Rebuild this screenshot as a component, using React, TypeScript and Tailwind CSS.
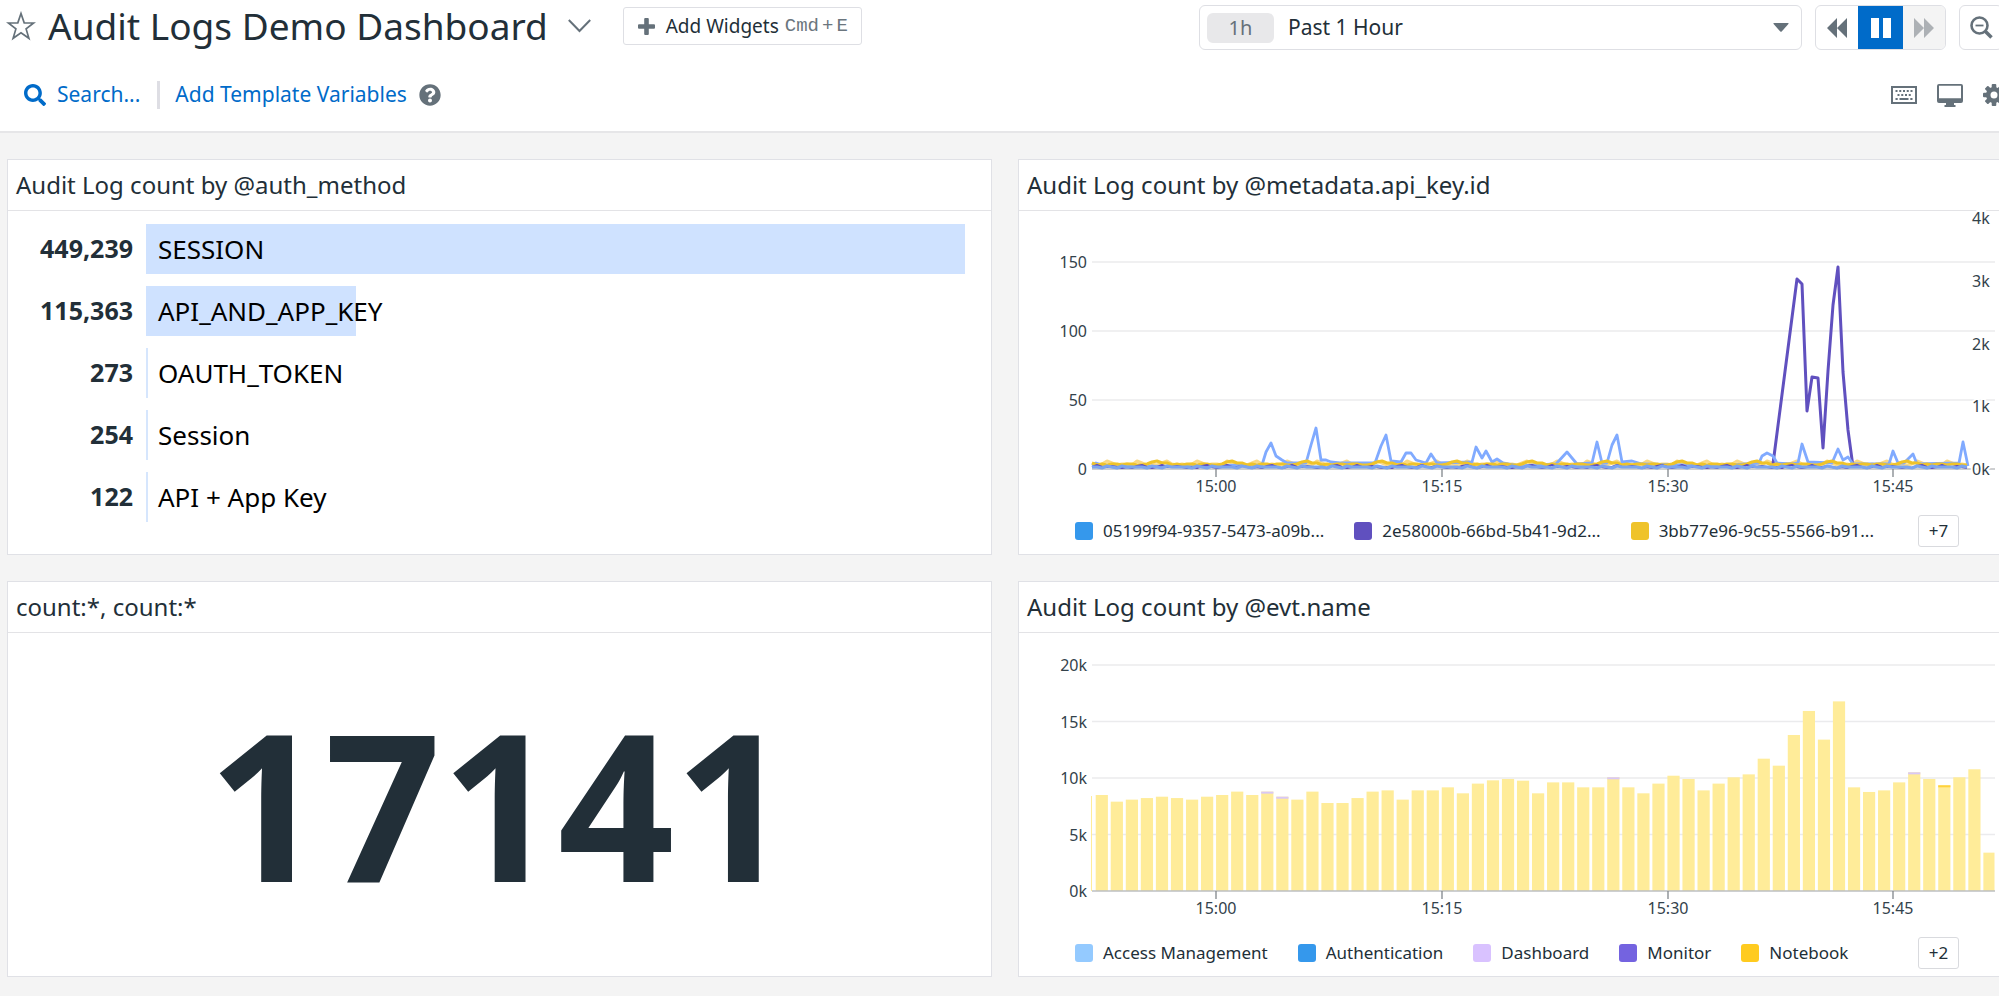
import type { ReactNode } from "react";
import { FaQuestionCircle, FaSearch } from "react-icons/fa";

type Series = { label: string; swatch: string };
type Bar = { total: number; cap?: string };

const authMethods = [
  { name: "SESSION", count: 449239 },
  { name: "API_AND_APP_KEY", count: 115363 },
  { name: "OAUTH_TOKEN", count: 273 },
  { name: "Session", count: 254 },
  { name: "API + App Key", count: 122 },
];

const apiKeySeries: Series[] = [
  { label: "05199f94-9357-5473-a09b...", swatch: "bg-[#3598ec]" },
  { label: "2e58000b-66bd-5b41-9d2...", swatch: "bg-[#6050bf]" },
  { label: "3bb77e96-9c55-5566-b91...", swatch: "bg-[#efc32a]" },
];

const eventSeries: Series[] = [
  { label: "Access Management", swatch: "bg-[#94caff]" },
  { label: "Authentication", swatch: "bg-[#3598ec]" },
  { label: "Dashboard", swatch: "bg-[#d9c2ff]" },
  { label: "Monitor", swatch: "bg-[#7463e0]" },
  { label: "Notebook", swatch: "bg-[#ffcb1f]" },
];

const LILAC = "#d9c8f5";
const AMBER = "#ffd23d";

const eventBars: Bar[] = [
  ...[8510, 7920, 8100, 8240, 8360, 8240, 8100, 8360, 8510, 8810, 8510].map((total) => ({ total })),
  { total: 8810, cap: LILAC },
  { total: 8360, cap: LILAC },
  ...[
    8100, 8810, 7800, 7800, 8240, 8810, 8920, 8100, 8920, 8920, 9190, 8660, 9520, 9810, 9930, 9780, 8660, 9630, 9630,
    9190, 9190,
  ].map((total) => ({ total })),
  { total: 10080, cap: LILAC },
  ...[
    9190, 8660, 9520, 10220, 9930, 8920, 9520, 10080, 10340, 11730, 11110, 13830, 15960, 13420, 16810, 9190, 8780,
    8920, 9630,
  ].map((total) => ({ total })),
  { total: 10520, cap: LILAC },
  { total: 9930 },
  { total: 9370, cap: AMBER },
  ...[10080, 10790, 3400].map((total) => ({ total })),
];

const timeTicks = [
  { x: 197, label: "15:00" },
  { x: 423, label: "15:15" },
  { x: 649, label: "15:30" },
  { x: 874, label: "15:45" },
];

const PLOT_LEFT = 73;
const PLOT_RIGHT = 976;
const BASELINE = 258;

const blueLine =
  "73,254 77,252 83,254 95,256 243,254 247,241 252,232 257,245 263,249 268,252 287,252 292,234 297,217 302,249 307,249 312,251 321,252 356,252 362,235 367,224 372,250 382,251 387,242 392,242 397,249 407,252 412,243 418,252 453,251 457,236 463,247 467,240 473,251 478,248 484,252 500,255 537,253 548,241 558,253 573,252 578,231 583,252 588,252 593,234 598,224 603,251 613,250 623,253 700,255 740,252 743,245 748,242 754,245 758,252 773,253 779,252 783,233 789,251 813,252 819,238 824,249 829,246 834,253 870,253 874,240 879,252 885,252 894,243 898,253 940,252 944,231 949,255";
const purpleLine =
  "754,253 778,68 783,73 788,200 793,166 799,167 804,237 809,160 814,94 819,56 824,161 829,219 834,256";

// Low-volume keys hover just above zero; each one repeats a short cycle of levels, one per 20 seconds.
function lowLine(levels: number[]) {
  const points: string[] = [];
  for (let i = 0; i * 5 + PLOT_LEFT <= 949; i++) {
    points.push(`${PLOT_LEFT + i * 5},${levels[i % levels.length]}`);
  }
  return points.join(" ");
}

const amberLow = lowLine([252, 254, 253, 254, 253, 253, 254, 253, 253, 254, 254, 253, 251, 250, 252]);
const paleLow = lowLine([253, 254, 253, 250, 252, 254, 253, 253, 254, 250, 252, 254, 253, 254, 252, 250, 253, 254]);
const purpleLow = lowLine([256, 254, 256, 256, 255, 256, 257, 256, 257, 255, 254, 256, 257]);
const skyLow = lowLine([256, 256, 257, 255, 256, 257, 255, 256, 256]);

function Axis({ rows, step, labels }: { rows: number; step: number; labels: string[] }) {
  return (
    <>
      {Array.from({ length: rows }, (_, i) => (
        <line
          key={i}
          x1={PLOT_LEFT}
          x2={PLOT_RIGHT}
          y1={BASELINE - step * (i + 1)}
          y2={BASELINE - step * (i + 1)}
          stroke="#ebebed"
          strokeWidth="1.5"
        />
      ))}
      {labels.map((label, i) => (
        <text key={label} x="68" y={BASELINE - step * i + 6} textAnchor="end" className="fill-[#33424b] text-[16px]">
          {label}
        </text>
      ))}
    </>
  );
}

function TimeAxis() {
  return (
    <>
      <line x1={PLOT_LEFT} x2={PLOT_RIGHT} y1={BASELINE} y2={BASELINE} stroke="#bdbfc2" strokeWidth="1.5" />
      {timeTicks.map(({ x, label }) => (
        <g key={label}>
          <line x1={x} x2={x} y1={BASELINE} y2={BASELINE + 8} stroke="#80868b" strokeWidth="1.3" />
          <text x={x} y="281" textAnchor="middle" className="fill-[#33424b] text-[16px]">
            {label}
          </text>
        </g>
      ))}
    </>
  );
}

function ApiKeyChart() {
  return (
    <svg viewBox="0 0 983 298" className="block h-auto w-full overflow-visible" role="img" aria-label="Audit log count by API key">
      <Axis rows={3} step={69} labels={["0", "50", "100", "150"]} />
      <TimeAxis />
      <g fill="none" strokeLinejoin="round">
        <polyline points={paleLow} stroke="#fbd983" strokeWidth="3" />
        <polyline points={purpleLine} stroke="#6050bf" strokeWidth="3" />
        <polyline points={blueLine} stroke="#80aaff" strokeWidth="2.8" />
        <polyline points={amberLow} stroke="#efc32a" strokeWidth="3" />
        <polyline points={purpleLow} stroke="#6050bf" strokeWidth="2" />
        <polyline points={skyLow} stroke="#7ba4ee" strokeWidth="3" />
      </g>
      {["0k", "1k", "2k", "3k", "4k"].map((label, i) => (
        <text
          key={label}
          x="953"
          y={264 - i * 63 + (i > 1 ? 1 : 0)}
          stroke="#ffffff"
          strokeWidth="4"
          paintOrder="stroke"
          className="fill-[#33424b] text-[16px]"
        >
          {label}
        </text>
      ))}
    </svg>
  );
}

function EventChart() {
  return (
    <svg viewBox="0 0 983 298" className="block h-auto w-full" role="img" aria-label="Audit log count by event name">
      <Axis rows={4} step={56.5} labels={["0k", "5k", "10k", "15k", "20k"]} />
      <rect x="72" y="163" width="1" height="95" fill="#ffec99" />
      {eventBars.map(({ total, cap }, i) => {
        const height = (total / 5000) * 56.4;
        const x = 76.7 + i * 15.045;
        const width = Math.min(12.2, 975.5 - x);
        return (
          <g key={i}>
            <rect x={x} y={BASELINE - height} width={width} height={height} fill="#ffec99" />
            {cap && <rect x={x} y={BASELINE - height} width={width} height="2" fill={cap} />}
          </g>
        );
      })}
      <TimeAxis />
    </svg>
  );
}

function Legend({ items, more }: { items: Series[]; more: string }) {
  return (
    <div className="flex h-11 items-center justify-between pr-[43px] pl-14 text-[17px]">
      <ul className="flex gap-[30px]">
        {items.map(({ label, swatch }) => (
          <li key={label} className="flex items-center gap-[10px] whitespace-nowrap">
            <span className={`size-[18px] rounded-[3px] ${swatch}`} />
            {label}
          </li>
        ))}
      </ul>
      <button type="button" className="h-8 w-[41px] rounded-[3px] border border-[#d9dade] bg-white">
        {more}
      </button>
    </div>
  );
}

function Panel({ title, children }: { title: string; children: ReactNode }) {
  return (
    <section className="flex min-w-0 flex-col border border-[#e0e1e6] bg-white">
      <h2 className="flex h-[51px] items-center border-b border-[#e3e3e6] px-2 text-[24px] whitespace-nowrap">{title}</h2>
      <div className="flex min-h-[343px] grow flex-col">{children}</div>
    </section>
  );
}

function TopList() {
  const max = authMethods[0].count;
  return (
    <ul className="flex flex-col gap-3 py-[13px] pr-[26px]">
      {authMethods.map(({ name, count }) => (
        <li key={name} className="flex h-[50px] items-center gap-[13px]">
          <span className="w-[125px] text-right text-[25px] font-bold">{count.toLocaleString("en-US")}</span>
          <div className="grid h-full grow items-center text-[26px] text-black">
            <div
              className={
                count > 1000
                  ? "col-start-1 row-start-1 h-full bg-[#cfe2ff]"
                  : "col-start-1 row-start-1 h-full min-w-[2px] bg-[#d6e6fd]"
              }
              style={{ width: `${(count / max) * 100}%` }}
            />
            <span className="col-start-1 row-start-1 pl-3 leading-9">{name}</span>
          </div>
        </li>
      ))}
    </ul>
  );
}

function PlaybackControls() {
  return (
    <div className="flex h-[45px] w-[131px] overflow-hidden rounded-md border border-[#dedfe4]">
      <button type="button" aria-label="Step back" className="flex grow items-center justify-center">
        <svg width="20" height="20" viewBox="0 0 20 20" fill="#65717a">
          <path d="M10 0v20L0 10zM20 0v20L10 10z" />
        </svg>
      </button>
      <button type="button" aria-label="Pause" className="-my-px flex w-[45px] items-center justify-center bg-[#006bc9]">
        <svg width="20" height="20" viewBox="0 0 20 20" fill="#fff">
          <path d="M0 0h8v20H0zM12 0h8v20h-8z" />
        </svg>
      </button>
      <button type="button" aria-label="Step forward" className="flex grow items-center justify-center bg-[#f4f4f4]">
        <svg width="20" height="20" viewBox="0 0 20 20" fill="#adb1b5">
          <path d="M0 0v20l10-10zM10 0v20l10-10z" />
        </svg>
      </button>
    </div>
  );
}

function Header() {
  return (
    <header className="border-b-2 border-[#e6e6e8] bg-white pt-[5px] pb-[21px] whitespace-nowrap">
      <div className="-mr-1 flex h-[45px] items-start pl-[6px]">
        <div className="flex h-[42px] grow items-center">
          <button type="button" aria-label="Add to favorites">
            <svg width="30" height="30" viewBox="0 0 30 30" fill="none" stroke="#65717a" strokeWidth="1.7">
              <path d="M15 2.500l3.200 9.300 9.500.2-7.600 5.900 2.800 9.400-7.900-5.600-7.900 5.600 2.800-9.400L2.300 12l9.500-.2z" />
            </svg>
          </button>
          <h1 className="ml-3 text-[37px] leading-[42px]">Audit Logs Demo Dashboard</h1>
          <button type="button" aria-label="Dashboard menu" className="ml-5">
            <svg width="23" height="14" viewBox="0 0 23 14" fill="none" stroke="#65717a" strokeWidth="2">
              <path d="M.8 1l10.700 11L22.200 1" />
            </svg>
          </button>
          <button
            type="button"
            className="ml-8 flex h-[38px] items-center rounded-[3px] border border-[#dedfe4] pr-[13px] pl-[14px] text-[19px]"
          >
            <svg width="17" height="17" viewBox="0 0 17 17" fill="#65717a">
              <path d="M6.200 1q0-1 1-1h2.600q1 0 1 1v5.200H16q1 0 1 1v2.600q0 1-1 1h-5.200V16q0 1-1 1H7.200q-1 0-1-1v-5.200H1q-1 0-1-1V7.200q0-1 1-1h5.200z" />
            </svg>
            <span className="ml-[11px]">Add Widgets</span>
            <kbd className="ml-[6px] flex gap-[3px] font-['Liberation_Mono',monospace] text-[19px] text-[#6b767e]">
              <span>Cmd</span>
              <span>+</span>
              <span>E</span>
            </kbd>
          </button>
        </div>
        <label className="flex h-[45px] w-[603px] items-center rounded-md border border-[#dedfe4] pr-3 pl-[7px] text-[20px]">
          <span className="flex h-[30px] w-[67px] items-center justify-center rounded-md bg-[#e8e8ea] text-[#65717a]">1h</span>
          <select aria-label="Time range" className="ml-[14px] grow appearance-none bg-transparent text-[21px] outline-none">
            <option>Past 1 Hour</option>
          </select>
          <svg width="16" height="9" viewBox="0 0 16 9" fill="#65717a">
            <path d="M1 0h14q1 0 .4.900L8.700 8.500q-.7.700-1.400 0L.600.900Q0 0 1 0z" />
          </svg>
        </label>
        <div className="mr-[13px] ml-[13px]">
          <PlaybackControls />
        </div>
        <button
          type="button"
          aria-label="Zoom out"
          className="flex h-[45px] w-11 items-center justify-center rounded-md border border-[#dedfe4]"
        >
          <svg width="23" height="23" viewBox="0 0 23 23" fill="none" stroke="#65717a">
            <circle cx="9.500" cy="9.500" r="8" strokeWidth="2.600" />
            <path d="M5.500 9.500h8" strokeWidth="1.800" />
            <path d="M15.500 15.500l6 6" strokeWidth="3.600" />
          </svg>
        </button>
      </div>

      <div className="-mr-1.5 mt-[30px] flex h-[30px] items-center pl-6 text-[21px] text-[#006bc9]">
        <button type="button" className="flex items-center gap-[11px]">
          <FaSearch size={22} />
          Search...
        </button>
        <span className="mr-[15px] ml-[17px] h-7 w-[3px] bg-[#dedee4]" />
        <a href="#template-variables">Add Template Variables</a>
        <button type="button" aria-label="Help" className="ml-3 text-[#65717a]">
          <FaQuestionCircle size={22} />
        </button>
        <div className="ml-auto flex items-center gap-5">
          <button type="button" aria-label="Keyboard shortcuts">
            <svg width="26" height="18" viewBox="0 0 26 18">
              <path d="M1 1h24v16H1z" fill="none" stroke="#65717a" strokeWidth="2" />
              <path d="M4.500 5h17" stroke="#65717a" strokeWidth="2" strokeDasharray="2 1.750" />
              <path d="M6.500 9h14" stroke="#65717a" strokeWidth="2" strokeDasharray="2 1.750" />
              <path d="M4.500 13h2.200M8.500 13h9M19.300 13h2.200" stroke="#65717a" strokeWidth="2.200" />
            </svg>
          </button>
          <button type="button" aria-label="TV mode">
            <svg width="26" height="23" viewBox="0 0 26 23" fill="#65717a">
              <path
                fillRule="evenodd"
                d="M2 0h22q2 0 2 2v15q0 2-2 2h-7v2h1.500v2h-11v-2H9v-2H2q-2 0-2-2V2q0-2 2-2zM2 1.800v12.400h22V1.800z"
              />
            </svg>
          </button>
          <button type="button" aria-label="Settings">
            <svg width="22" height="22" viewBox="-11 -11 22 22" fill="#65717a">
              {[0, 45, 90, 135].map((angle) => (
                <rect key={angle} x="-2.300" y="-11" width="4.600" height="22" rx="1" transform={`rotate(${angle})`} />
              ))}
              <circle r="8" />
              <circle r="3.500" fill="#fff" />
            </svg>
          </button>
        </div>
      </div>
    </header>
  );
}

export default function App() {
  return (
    <div className="min-h-screen overflow-hidden bg-[#f4f4f4] font-['Noto_Sans',sans-serif] text-[#222f38]">
      <Header />
      <main className="-mr-1 grid grid-cols-2 gap-[26px] pt-[26px] pb-5 pl-[7px]">
        <Panel title="Audit Log count by @auth_method">
          <TopList />
        </Panel>
        <Panel title="Audit Log count by @metadata.api_key.id">
          <ApiKeyChart />
          <Legend items={apiKeySeries} more="+7" />
        </Panel>
        <Panel title="count:*, count:*">
          <p className="flex grow items-center justify-center pb-1 text-[204px] leading-none font-bold">17141</p>
        </Panel>
        <Panel title="Audit Log count by @evt.name">
          <EventChart />
          <Legend items={eventSeries} more="+2" />
        </Panel>
      </main>
    </div>
  );
}
